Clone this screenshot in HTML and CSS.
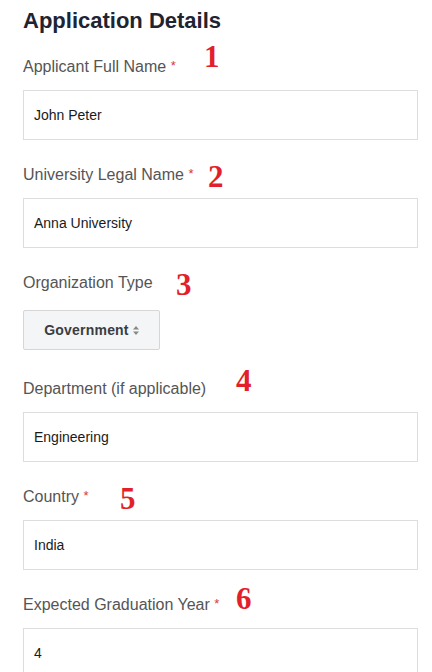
FILE: index.html
```html
<!DOCTYPE html>
<html>
<head>
<meta charset="utf-8">
<link rel="stylesheet" href="styles.css">
</head>
<body>
<div class="page">
  <h1 class="title">Application Details</h1>

  <div class="field">
    <div class="label">Applicant Full Name <span class="req">*</span><span class="num n1">1</span></div>
    <div class="input">John Peter</div>
  </div>

  <div class="field">
    <div class="label">University Legal Name <span class="req">*</span><span class="num n2">2</span></div>
    <div class="input">Anna University</div>
  </div>

  <div class="field field-select">
    <div class="label">Organization Type<span class="num n3">3</span></div>
    <div class="select">Government <span class="caret"><svg width="6" height="9" viewBox="0 0 6 9"><path d="M3 0L6 3.5H0Z M3 9L0 5.5H6Z" fill="#888"/></svg></span></div>
  </div>

  <div class="field">
    <div class="label">Department (if applicable)<span class="num n4">4</span></div>
    <div class="input">Engineering</div>
  </div>

  <div class="field">
    <div class="label">Country <span class="req">*</span><span class="num n5">5</span></div>
    <div class="input">India</div>
  </div>

  <div class="field">
    <div class="label">Expected Graduation Year <span class="req">*</span><span class="num n6">6</span></div>
    <div class="input">4</div>
  </div>
</div>
</body>
</html>
```

FILE: styles.css
```css
html, body {
  margin: 0;
  padding: 0;
  background: #ffffff;
}
.page {
  padding: 7px 14px 0 23px;
  font-family: "Liberation Sans", Arial, sans-serif;
}
.title {
  margin: 0 0 23px 0;
  font-size: 22px;
  line-height: 27px;
  font-weight: bold;
  color: #1e2431;
}
.field {
  margin-bottom: 25px;
}
.label {
  position: relative;
  height: 20px;
  font-size: 16px;
  line-height: 20px;
  color: #555555;
  margin-bottom: 13px;
}
.req {
  color: #d9363e;
  font-size: 13px;
  line-height: 0;
  vertical-align: 2px;
}
.num {
  position: absolute;
  font-family: "Liberation Serif", "Times New Roman", serif;
  font-weight: bold;
  font-size: 31px;
  line-height: 30px;
  color: #e21f2a;
}
.n1 { left: 181px; top: -15px; }
.n2 { left: 185px; top: -3px; }
.n3 { left: 153px; top: -3px; }
.n4 { left: 213px; top: -13px; }
.n5 { left: 97px; top: -3px; }
.n6 { left: 213px; top: -11px; }
.input {
  box-sizing: border-box;
  height: 50px;
  border: 1px solid #dddddd;
  padding: 0 10px;
  display: flex;
  align-items: center;
  font-size: 14px;
  color: #1a1a1a;
}
.field-select .label {
  margin-bottom: 17px;
}
.field-select {
  margin-bottom: 29px;
}
.select {
  box-sizing: border-box;
  width: 137px;
  height: 40px;
  border: 1px solid #d6d6d6;
  border-radius: 2px;
  background: #f4f5f6;
  display: flex;
  align-items: center;
  justify-content: center;
  gap: 4px;
  font-size: 14px;
  font-weight: bold;
  color: #3a3d42;
  letter-spacing: 0.2px;
}
.caret {
  display: flex;
  align-items: center;
}
```
